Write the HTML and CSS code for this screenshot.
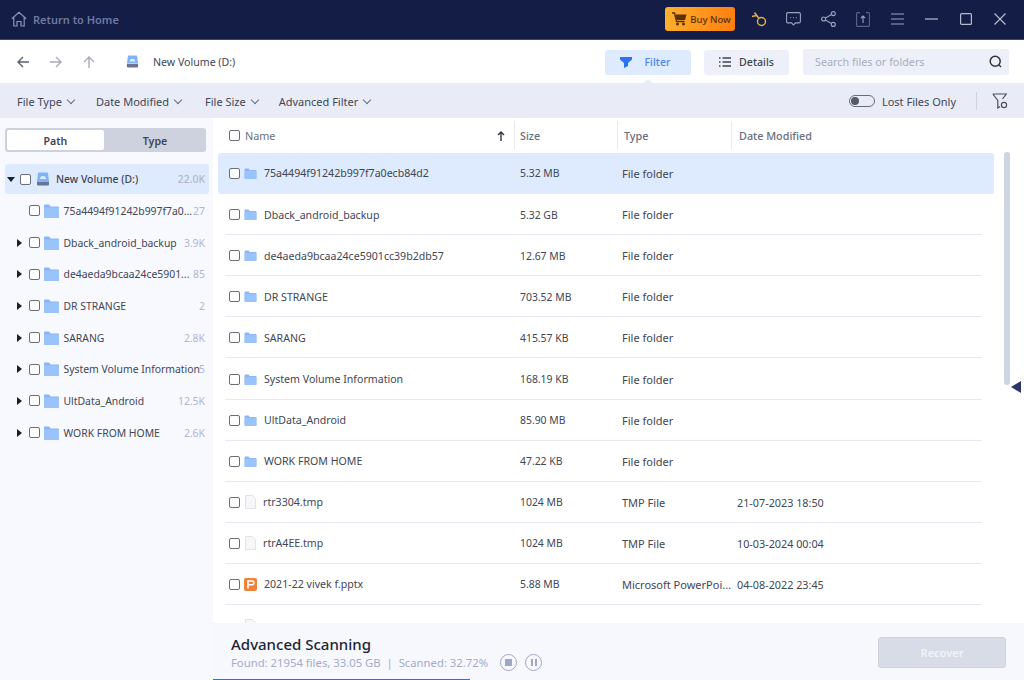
FILE: index.html
```html
<!DOCTYPE html>
<html>
<head>
    <title>Data Recovery</title>
    <link rel="stylesheet" href="styles.css">
</head>
<body>
    <svg class="sprites" width="0" height="0">
        <symbol id="folder" viewBox="0 0 15 14"><path d="M0 1.5Q0 .5 1 .5H5L6.5 2.5H14Q15 2.5 15 3.5V13Q15 14 14 14H1Q0 14 0 13Z" fill="#86b5fb"/><path d="M0 3.5H15V13Q15 14 14 14H1Q0 14 0 13Z" fill="#9ac3fc"/></symbol>
        <symbol id="drive" viewBox="0 0 14 14"><path d="M2 1.5Q2 .5 3 .5H11Q12 .5 12 1.5L13 9H1Z" fill="#7db4f7"/><path d="M4 7A3 3 0 0 1 10 7Z" fill="#dcebfe"/><path d="M1 9.5H13V12.5Q13 13.5 12 13.5H2Q1 13.5 1 12.5Z" fill="#6a7390"/></symbol>
        <symbol id="blank" viewBox="0 0 11 14"><path d="M.5.5H7.5L10.5 3.5V13.5H.5Z" fill="#f7f7f9" stroke="#e2e3e8"/></symbol>
    </svg>

    <header class="titlebar">
        <a class="home">
            <svg width="16" height="16" viewBox="0 0 16 16" fill="none" stroke="#8a94b8" stroke-width="1.2"><path d="M.8 7.8 8 1.2l7.2 6.6M2.8 6.5V15H6V10.5H10V15H13.2V6.5"/></svg>
            Return to Home
        </a>
        <div class="title-actions">
            <button class="buy">
                <svg width="15" height="14" viewBox="0 0 15 14"><path d="M0 1H2.5L4.5 9.5H12.5" fill="none" stroke="#5a3100" stroke-width="1.3"/><path d="M3.3 2.5H14.5L13 8H4.5Z" fill="#5a3100"/><circle cx="5.5" cy="12" r="1.5" fill="#5a3100"/><circle cx="11.5" cy="12" r="1.5" fill="#5a3100"/></svg>
                Buy Now
            </button>
            <svg class="t-key" width="16" height="16" viewBox="0 0 16 16" fill="none" stroke="#e0b04a" stroke-width="1.5"><circle cx="10.5" cy="10.5" r="4"/><path d="M8 7.5 3.5 1.5M5.5 4.5 1 5.5"/></svg>
            <svg class="t-chat" width="15" height="14" viewBox="0 0 15 14" fill="none" stroke="#9aa2c0" stroke-width="1.1"><path d="M2 .6H13Q14.4.6 14.4 2V9.5Q14.4 10.9 13 10.9H9.5L7.5 13 5.5 10.9H2Q.6 10.9.6 9.5V2Q.6.6 2 .6Z"/><path d="M4.2 5.8H5.2M7 5.8H8M9.8 5.8H10.8"/></svg>
            <svg class="t-share" width="15" height="16" viewBox="0 0 15 16" fill="none" stroke="#9aa2c0" stroke-width="1.1"><circle cx="12.3" cy="2.6" r="2"/><circle cx="2.6" cy="8" r="2"/><circle cx="12.3" cy="13.4" r="2"/><path d="M4.4 7 10.5 3.6M4.4 9 10.5 12.4"/></svg>
            <svg class="t-up" width="14" height="15" viewBox="0 0 14 15" fill="none" stroke="#59638a" stroke-width="1.1"><path d="M4 .6H1.6Q.6.6.6 1.6V13.4Q.6 14.4 1.6 14.4H12.4Q13.4 14.4 13.4 13.4V1.6Q13.4.6 12.4.6H10"/><path d="M7 11V4M5 6 7 4 9 6" stroke="#9aa2c0"/></svg>
            <svg class="t-menu" width="13" height="12" viewBox="0 0 13 12" stroke="#9aa2c0" stroke-width="1.2"><path d="M0 1H13M0 6H13M0 11H13"/></svg>
            <svg class="t-min" width="13" height="2" viewBox="0 0 13 2" stroke="#b5bad0" stroke-width="1.2"><path d="M0 1H13"/></svg>
            <svg class="t-max" width="12" height="12" viewBox="0 0 12 12" fill="none" stroke="#b5bad0" stroke-width="1.2"><rect x=".6" y=".6" width="10.8" height="10.8" rx="1"/></svg>
            <svg class="t-close" width="12" height="12" viewBox="0 0 12 12" stroke="#b5bad0" stroke-width="1.2"><path d="M.5.5 11.5 11.5M11.5.5.5 11.5"/></svg>
        </div>
    </header>

    <div class="toolbar">
        <div class="nav">
            <svg width="12" height="12" viewBox="0 0 12 12" fill="none" stroke="#5b6070" stroke-width="1.4"><path d="M12 6H1M6 1 1 6l5 5"/></svg>
            <svg width="12" height="12" viewBox="0 0 12 12" fill="none" stroke="#a9acb6" stroke-width="1.4"><path d="M0 6H11M6 1l5 5-5 5"/></svg>
            <svg width="12" height="12" viewBox="0 0 12 12" fill="none" stroke="#a9acb6" stroke-width="1.4"><path d="M6 12V1M1 6l5-5 5 5"/></svg>
        </div>
        <svg class="crumb-icon" width="13" height="13"><use href="#drive"/></svg>
        <span class="crumb">New Volume (D:)</span>
        <button class="tool tool-active">
            <svg width="12" height="11" viewBox="0 0 12 11" fill="#2a74ee"><path d="M0 0H12V2.5L8 6V9L4 11V6L0 2.5Z"/></svg>
            Filter
        </button>
        <button class="tool tool-details">
            <svg width="12" height="10" viewBox="0 0 12 10" stroke="#3e4453" stroke-width="1.4"><path d="M0 1H1.5M3.5 1H12M0 5H1.5M3.5 5H12M0 9H1.5M3.5 9H12"/></svg>
            Details
        </button>
        <div class="search">
            <span>Search files or folders</span>
            <svg width="13" height="13" viewBox="0 0 13 13" fill="none" stroke="#30343f" stroke-width="1.5"><circle cx="6.2" cy="6.2" r="5"/><path d="M9.8 9.8 12 12"/></svg>
        </div>
    </div>

    <div class="filterbar">
        <span class="drop">File Type</span>
        <span class="drop drop-date">Date Modified</span>
        <span class="drop drop-size">File Size</span>
        <span class="drop">Advanced Filter</span>
        <div class="lost">
            <span class="switch"></span>
            <span>Lost Files Only</span>
        </div>
        <svg class="filter-opt" width="16" height="16" viewBox="0 0 16 16" fill="none" stroke="#4a4f5e" stroke-width="1.2"><path d="M.8 1H14.2L10.5 6M.8 1 5.8 7.5V15L8 13.5"/><circle cx="12" cy="12" r="2.6"/></svg>
    </div>

    <div class="content">
        <aside class="sidebar">
            <div class="tabs">
                <span class="tab tab-on">Path</span>
                <span class="tab tab-off">Type</span>
            </div>
            <ul class="tree">
                <li class="node node-root">
                    <span class="caret caret-open"></span><span class="box"></span>
                    <svg class="drive" width="14" height="14"><use href="#drive"/></svg>
                    <span class="node-name">New Volume (D:)</span><span class="count">22.0K</span>
                </li>
                <li class="node">
                    <span class="caret caret-none"></span><span class="box"></span>
                    <svg class="folder-lg" width="15" height="14"><use href="#folder"/></svg>
                    <span class="node-name">75a4494f91242b997f7a0...</span><span class="count">27</span>
                </li>
                <li class="node">
                    <span class="caret"></span><span class="box"></span>
                    <svg class="folder-lg" width="15" height="14"><use href="#folder"/></svg>
                    <span class="node-name">Dback_android_backup</span><span class="count">3.9K</span>
                </li>
                <li class="node">
                    <span class="caret"></span><span class="box"></span>
                    <svg class="folder-lg" width="15" height="14"><use href="#folder"/></svg>
                    <span class="node-name">de4aeda9bcaa24ce5901...</span><span class="count">85</span>
                </li>
                <li class="node">
                    <span class="caret"></span><span class="box"></span>
                    <svg class="folder-lg" width="15" height="14"><use href="#folder"/></svg>
                    <span class="node-name">DR STRANGE</span><span class="count">2</span>
                </li>
                <li class="node">
                    <span class="caret"></span><span class="box"></span>
                    <svg class="folder-lg" width="15" height="14"><use href="#folder"/></svg>
                    <span class="node-name">SARANG</span><span class="count">2.8K</span>
                </li>
                <li class="node">
                    <span class="caret"></span><span class="box"></span>
                    <svg class="folder-lg" width="15" height="14"><use href="#folder"/></svg>
                    <span class="node-name">System Volume Information</span><span class="count">5</span>
                </li>
                <li class="node">
                    <span class="caret"></span><span class="box"></span>
                    <svg class="folder-lg" width="15" height="14"><use href="#folder"/></svg>
                    <span class="node-name">UltData_Android</span><span class="count">12.5K</span>
                </li>
                <li class="node">
                    <span class="caret"></span><span class="box"></span>
                    <svg class="folder-lg" width="15" height="14"><use href="#folder"/></svg>
                    <span class="node-name">WORK FROM HOME</span><span class="count">2.6K</span>
                </li>
            </ul>
        </aside>

        <main class="main">
            <div class="thead">
                <div class="col col-name"><span class="box"></span>Name
                    <svg class="sort" width="8" height="10" viewBox="0 0 8 10" fill="none" stroke="#30343f" stroke-width="1.4"><path d="M4 10V1M1 4 4 1l3 3"/></svg>
                </div>
                <div class="col col-size">Size</div>
                <div class="col col-type">Type</div>
                <div class="col col-date">Date Modified</div>
            </div>
            <div class="rows">
                <div class="row row-on">
                    <div class="col col-name"><span class="box"></span><svg width="13" height="11"><use href="#folder"/></svg>75a4494f91242b997f7a0ecb84d2</div>
                    <div class="col col-size">5.32 MB</div><div class="col col-type">File folder</div><div class="col col-date"></div>
                </div>
                <div class="row">
                    <div class="col col-name"><span class="box"></span><svg width="13" height="11"><use href="#folder"/></svg>Dback_android_backup</div>
                    <div class="col col-size">5.32 GB</div><div class="col col-type">File folder</div><div class="col col-date"></div>
                </div>
                <div class="row">
                    <div class="col col-name"><span class="box"></span><svg width="13" height="11"><use href="#folder"/></svg>de4aeda9bcaa24ce5901cc39b2db57</div>
                    <div class="col col-size">12.67 MB</div><div class="col col-type">File folder</div><div class="col col-date"></div>
                </div>
                <div class="row">
                    <div class="col col-name"><span class="box"></span><svg width="13" height="11"><use href="#folder"/></svg>DR STRANGE</div>
                    <div class="col col-size">703.52 MB</div><div class="col col-type">File folder</div><div class="col col-date"></div>
                </div>
                <div class="row">
                    <div class="col col-name"><span class="box"></span><svg width="13" height="11"><use href="#folder"/></svg>SARANG</div>
                    <div class="col col-size">415.57 KB</div><div class="col col-type">File folder</div><div class="col col-date"></div>
                </div>
                <div class="row">
                    <div class="col col-name"><span class="box"></span><svg width="13" height="11"><use href="#folder"/></svg>System Volume Information</div>
                    <div class="col col-size">168.19 KB</div><div class="col col-type">File folder</div><div class="col col-date"></div>
                </div>
                <div class="row">
                    <div class="col col-name"><span class="box"></span><svg width="13" height="11"><use href="#folder"/></svg>UltData_Android</div>
                    <div class="col col-size">85.90 MB</div><div class="col col-type">File folder</div><div class="col col-date"></div>
                </div>
                <div class="row">
                    <div class="col col-name"><span class="box"></span><svg width="13" height="11"><use href="#folder"/></svg>WORK FROM HOME</div>
                    <div class="col col-size">47.22 KB</div><div class="col col-type">File folder</div><div class="col col-date"></div>
                </div>
                <div class="row">
                    <div class="col col-name"><span class="box"></span><svg class="file" width="11" height="14"><use href="#blank"/></svg>rtr3304.tmp</div>
                    <div class="col col-size">1024 MB</div><div class="col col-type">TMP File</div><div class="col col-date">21-07-2023 18:50</div>
                </div>
                <div class="row">
                    <div class="col col-name"><span class="box"></span><svg class="file" width="11" height="14"><use href="#blank"/></svg>rtrA4EE.tmp</div>
                    <div class="col col-size">1024 MB</div><div class="col col-type">TMP File</div><div class="col col-date">10-03-2024 00:04</div>
                </div>
                <div class="row">
                    <div class="col col-name"><span class="box"></span>
                        <svg class="pptx" width="13" height="13" viewBox="0 0 13 13"><rect width="13" height="13" rx="2" fill="#f4813a"/><path d="M4 10.5V3H8.2Q10 3 10 4.8T8.2 6.8H4" fill="none" stroke="#fff" stroke-width="1.6"/></svg>
                        2021-22 vivek f.pptx</div>
                    <div class="col col-size">5.88 MB</div><div class="col col-type">Microsoft PowerPoi...</div><div class="col col-date">04-08-2022 23:45</div>
                </div>
                <div class="row">
                    <div class="col col-name"><span class="box box-hidden"></span><svg class="file" width="11" height="14"><use href="#blank"/></svg></div>
                </div>
            </div>
            <div class="scrollbar"></div>
            <span class="panel-toggle"></span>
            <footer class="scanbar">
                <div class="scan-info">
                    <h3>Advanced Scanning</h3>
                    <div class="scan-stats">
                        <span class="scan-text">Found: 21954 files, 33.05 GB&nbsp; |&nbsp; Scanned: 32.72%</span>
                        <span class="round"><i class="stop"></i></span>
                        <span class="round"><i class="pause"></i></span>
                    </div>
                </div>
                <button class="recover">Recover</button>
                <div class="progress"></div>
            </footer>
        </main>
    </div>
</body>
</html>
```

FILE: styles.css
```css
* {
    box-sizing: border-box;
}
html, body {
    margin: 0;
    height: 680px;
    overflow: hidden;
}
body {
    display: flex;
    flex-direction: column;
    background: #fff;
    font-family: "Noto Sans", "Open Sans", sans-serif;
    font-size: 10.6px;
    color: #414655;
}
button {
    font-family: inherit;
    border: none;
}
.sprites {
    position: absolute;
}

/* title bar */
.titlebar {
    height: 40px;
    flex: none;
    display: flex;
    align-items: center;
    justify-content: space-between;
    padding: 0 0 1px 11px;
    font-size: 11px;
    background: #141d45;
    border-bottom: 1px solid #3c4468;
}
.home {
    display: flex;
    align-items: center;
    gap: 6px;
    font-weight: 600;
    color: #6f79a3;
}
.title-actions {
    display: flex;
    align-items: center;
}
.buy {
    width: 70px;
    height: 24px;
    margin-right: 16px;
    display: flex;
    align-items: center;
    justify-content: center;
    gap: 3px;
    padding: 0 0 0 3px;
    border-radius: 3px;
    font-size: 9.6px;
    font-weight: 500;
    color: #5a3100;
    background: linear-gradient(100deg, #ffb02e, #ff7d0e);
}
.t-chat { margin-left: 19px; }
.t-share { margin-left: 20px; }
.t-up { margin-left: 20px; }
.t-menu { margin-left: 21px; }
.t-min { margin-left: 21px; }
.t-max { margin-left: 22px; }
.t-close { margin-left: 22px; margin-right: 18px; }

/* toolbar */
.toolbar {
    height: 43px;
    flex: none;
    display: flex;
    align-items: center;
    padding-left: 17px;
}
.nav {
    display: flex;
    gap: 21px;
}
.crumb-icon {
    margin-left: 31px;
}
.crumb {
    margin-left: 14px;
}
.tool {
    width: 86px;
    height: 25px;
    margin-top: 1px;
    display: flex;
    align-items: center;
    justify-content: center;
    gap: 13px;
    padding: 0;
    border-radius: 3px;
    font-size: 10.6px;
    font-weight: 500;
    color: #414655;
    background: #edf0f9;
}
.tool-active {
    position: relative;
    margin-left: auto;
    margin-right: 13px;
    padding-right: 6px;
    color: #4a86f0;
    background: #deeafd;
}
.tool-active::after {
    content: "";
    position: absolute;
    left: 37px;
    bottom: -9px;
    border: 6px solid transparent;
    border-top: 0;
    border-bottom: 5px solid #e9ecf7;
}
.tool-details {
    width: 85px;
    gap: 8px;
}
.search {
    width: 206px;
    height: 26px;
    margin: 0 15px 0 14px;
    padding: 0 7px 0 12px;
    display: flex;
    align-items: center;
    justify-content: space-between;
    border-radius: 3px;
    font-size: 10.8px;
    color: #a8adbd;
    background: #edf0f9;
}

/* filter bar */
.filterbar {
    height: 35px;
    flex: none;
    display: flex;
    align-items: center;
    padding: 1px 16px 0 17px;
    font-size: 11px;
    background: #e9ecf7;
}
.drop {
    display: flex;
    align-items: center;
    margin-right: 21px;
}
.drop-date {
    margin-right: 23px;
}
.drop-size {
    margin-right: 20px;
}
.drop::after {
    content: "";
    width: 5px;
    height: 5px;
    margin: -3px 1px 0 6px;
    border-right: 1px solid #666c7c;
    border-bottom: 1px solid #666c7c;
    transform: rotate(45deg);
}
.lost {
    margin-left: auto;
    display: flex;
    align-items: center;
    gap: 7px;
    padding-right: 20px;
    border-right: 1px solid #cfd2dd;
    height: 18px;
}
.switch {
    position: relative;
    width: 26px;
    height: 12px;
    border: 1px solid #666c7c;
    border-radius: 6px;
}
.switch::before {
    content: "";
    position: absolute;
    left: 1px;
    top: 1px;
    width: 8px;
    height: 8px;
    border-radius: 50%;
    background: #555a68;
}
.filter-opt {
    margin-left: 15px;
}

/* left tree */
.content {
    flex: 1;
    display: flex;
    min-height: 0;
}
.sidebar {
    width: 213px;
    flex: none;
    padding: 10px 4px 0 5px;
    background: #f8f9ff;
}
.tabs {
    width: 201px;
    height: 24px;
    padding: 2px;
    display: flex;
    border-radius: 3px;
    background: #cdd2de;
}
.tab {
    flex: 1;
    display: flex;
    align-items: center;
    justify-content: center;
    padding-top: 2px;
    font-weight: 600;
}
.tab-on {
    flex: none;
    width: 97px;
    border-radius: 2px;
    background: #fff;
}
.tab-off {
    padding-left: 2px;
}
.tree {
    list-style: none;
    margin: 12px 0 0;
    padding: 0;
    font-size: 10.4px;
}
.node {
    height: 31.7px;
    display: flex;
    align-items: center;
    padding-right: 4px;
    white-space: nowrap;
}
.node-root {
    height: 30px;
    margin-bottom: 1px;
    border-radius: 3px;
    background: #deeafd;
    font-weight: 500;
}
.caret {
    width: 6px;
    height: 8px;
    flex: none;
    margin-left: 12px;
    border-left: 5px solid #1d1f26;
    border-top: 4px solid transparent;
    border-bottom: 4px solid transparent;
}
.caret-open {
    width: 8px;
    height: 5px;
    margin-left: 2px;
    border-top: 5px solid #1d1f26;
    border-left: 4px solid transparent;
    border-right: 4px solid transparent;
    border-bottom: 0;
}
.caret-none {
    visibility: hidden;
}
.box {
    width: 11px;
    height: 11px;
    flex: none;
    border: 1px solid #6b6e78;
    border-radius: 2px;
    background: #fff;
}
.box-hidden {
    visibility: hidden;
}
.node .box {
    margin-left: 5.5px;
}
.node-root .box {
    margin-left: 5px;
}
.drive {
    margin-left: 5px;
}
.folder-lg {
    margin-left: 4px;
    flex: none;
}
.node-name {
    margin-left: 5px;
    flex: 1;
    min-width: 0;
}
.node-root .node-name {
    margin-left: 6px;
}
.count {
    flex: none;
    color: #b0b5d0;
}

/* file list */
.main {
    position: relative;
    flex: 1;
    min-width: 0;
    display: flex;
    flex-direction: column;
}
.thead {
    height: 35px;
    flex: none;
    display: flex;
    align-items: center;
    padding-left: 5px;
    font-size: 10.8px;
    font-weight: 500;
    color: #686e80;
}
.thead .col {
    height: 29px;
    border-right: 1px solid #e8eaf0;
}
.thead .col-date {
    padding-left: 7px;
    border-right: 0;
}
.thead .col-name {
    position: relative;
    font-weight: 400;
}
.thead .col-name .box {
    margin-right: 5px;
}
.thead .col-type {
    padding-left: 6px;
}
.sort {
    position: absolute;
    left: 279px;
    top: 10px;
}
.col {
    display: flex;
    align-items: center;
    flex: none;
    white-space: nowrap;
}
.col-name {
    width: 297px;
    padding-left: 11px;
}
.col-name .box {
    margin-right: 4px;
}
.col-name svg {
    margin-right: 7px;
}
.col-size {
    width: 103px;
    padding-left: 5px;
}
.col-type {
    width: 114px;
    padding-left: 5px;
}
.col-date {
    padding-left: 5px;
}
.file {
    margin-left: 1px;
}
.rows {
    flex: 1;
    min-height: 0;
    overflow: hidden;
    padding: 0 42px 0 12px;
}
.row {
    height: 41.1px;
    padding-top: 1px;
    display: flex;
    align-items: center;
    border-bottom: 1px solid #e6e9f4;
}
.row .col-name {
    width: 290px;
    padding-left: 4px;
}
.row .col-size {
    font-size: 10.4px;
}
.row .col-type {
    padding-left: 4px;
    font-size: 11px;
}
.row .col-date {
    font-size: 10.8px;
}
.row-on {
    height: 40.6px;
    margin: 0 -12px .5px -7px;
    padding: 0 0 0 7px;
    border-bottom: 0;
    border-radius: 3px;
    background: #deeafd;
}
.scrollbar {
    position: absolute;
    left: 791px;
    top: 34px;
    width: 6px;
    height: 233px;
    border-radius: 3px;
    background: #cdd5e3;
}
.panel-toggle {
    position: absolute;
    left: 798px;
    top: 263px;
    border-top: 6px solid transparent;
    border-bottom: 6px solid transparent;
    border-right: 10px solid #2c3768;
}

/* bottom scan status */
.scanbar {
    position: relative;
    height: 57px;
    flex: none;
    display: flex;
    align-items: center;
    justify-content: space-between;
    padding: 2px 18px 0 18px;
    background: #f7f8fe;
}
.scan-info h3 {
    margin: 0;
    font-size: 15px;
    font-weight: 500;
    line-height: 20px;
    color: #1f2433;
}
.scan-stats {
    display: flex;
    align-items: center;
    gap: 8px;
    color: #a4abc9;
}
.scan-text {
    margin-right: 4px;
    font-size: 11.3px;
}
.round {
    width: 17px;
    height: 17px;
    display: flex;
    align-items: center;
    justify-content: center;
    border: 1px solid #9fa7c8;
    border-radius: 50%;
}
.stop {
    width: 7px;
    height: 7px;
    background: #9fa7c8;
}
.pause {
    width: 6px;
    height: 7px;
    border-left: 2px solid #9fa7c8;
    border-right: 2px solid #9fa7c8;
}
.recover {
    width: 128px;
    height: 31px;
    margin-top: -1px;
    border: 1px solid #cdd2dd;
    border-radius: 3px;
    font-size: 11px;
    font-weight: 600;
    color: #f2f4f8;
    background: #d8dce6;
}
.progress {
    position: absolute;
    left: 0;
    bottom: 0;
    width: 257px;
    height: 1px;
    background: #3a6fd8;
}
```
